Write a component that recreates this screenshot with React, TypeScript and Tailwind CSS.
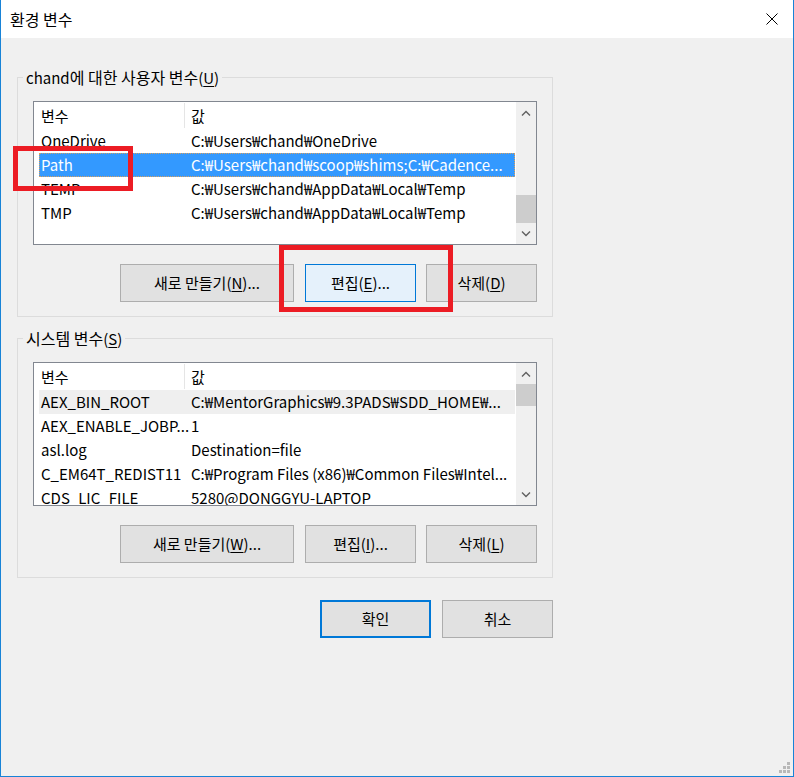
import React from "react";

const Chevron = ({ up }: { up?: boolean }) => (
  <svg width="10" height="6" viewBox="0 0 10 6" className="block">
    <path
      d={up ? "M1 5.5 L5 1.5 L9 5.5" : "M1 0.5 L5 4.5 L9 0.5"}
      fill="none"
      stroke="#606060"
      strokeWidth="1.4"
    />
  </svg>
);

type Row = { name: string; value: string; selected?: boolean; hover?: boolean };

function ListBox({
  rows,
  thumbTop,
  thumbH,
}: {
  rows: Row[];
  thumbTop: number;
  thumbH: number;
}) {
  return (
    <div className="w-[504px] h-[144px] border border-[#828790] bg-white flex overflow-hidden">
      <div className="w-[481px] flex flex-col pl-[5px] overflow-hidden">
        <div className="h-[27px] shrink-0 flex items-center">
          <div className="w-[145px] h-[25px] flex items-center pl-[2px]">변수</div>
          <div className="w-px h-[25px] bg-[#e5e5e5]" />
          <div className="flex-1 flex items-center pl-[6px]">값</div>
        </div>
        {rows.map((r) => (
          <div
            key={r.name}
            className={
              "h-[24px] shrink-0 flex items-center whitespace-nowrap leading-[20px] " +
              (r.selected
                ? "bg-[#3399ff] text-white border border-dotted border-[#d8a060]"
                : r.hover
                ? "bg-[#efefef] border border-transparent"
                : "border border-transparent")
            }
          >
            <div className="w-[151px] pl-[1px] overflow-x-hidden h-[20px]">{r.name}</div>
            <div className="flex-1 overflow-x-hidden h-[20px]">{r.value}</div>
          </div>
        ))}
      </div>
      <div className="w-px bg-white" />
      <div className="w-[20px] bg-[#f0f0f0] flex flex-col relative">
        <div className="h-[21px] shrink-0 flex items-center justify-center">
          <Chevron up />
        </div>
        <div className="flex-1 relative">
          <div
            className="absolute left-0 right-0 bg-[#cdcdcd]"
            style={{ top: thumbTop, height: thumbH }}
          />
        </div>
        <div className="h-[21px] shrink-0 flex items-center justify-center">
          <Chevron />
        </div>
      </div>
    </div>
  );
}

function Btn({
  children,
  w,
  focus,
}: {
  children: React.ReactNode;
  w: string;
  focus?: boolean;
}) {
  return (
    <div
      className={
        "h-[38px] flex items-center justify-center leading-[20px] " +
        w +
        (focus
          ? " bg-[#e5f1fb] border border-[#0078d7]"
          : " bg-[#e1e1e1] border border-[#adadad]")
      }
    >
      {children}
    </div>
  );
}

function Group({
  label,
  children,
  className,
}: {
  label: React.ReactNode;
  children: React.ReactNode;
  className?: string;
}) {
  return (
    <div
      className={
        "relative w-[536px] h-[240px] border border-[#dcdcdc] pt-[23px] px-[15px] " +
        (className || "")
      }
    >
      <div className="absolute left-[5px] top-[-12px] h-[22px] px-[3px] bg-[#f0f0f0] flex items-center leading-[20px]">
        {label}
      </div>
      {children}
    </div>
  );
}

const U = ({ c }: { c: string }) => (
  <span className="underline underline-offset-[2px] decoration-1">{c}</span>
);

const K = ({ children }: { children: React.ReactNode }) => (
  <span className="text-[16px]">{children}</span>
);

export default function App() {
  const userRows: Row[] = [
    { name: "OneDrive", value: "C:₩Users₩chand₩OneDrive" },
    {
      name: "Path",
      value: "C:₩Users₩chand₩scoop₩shims;C:₩Cadence...",
      selected: true,
    },
    { name: "TEMP", value: "C:₩Users₩chand₩AppData₩Local₩Temp" },
    { name: "TMP", value: "C:₩Users₩chand₩AppData₩Local₩Temp" },
  ];
  const sysRows: Row[] = [
    {
      name: "AEX_BIN_ROOT",
      value: "C:₩MentorGraphics₩9.3PADS₩SDD_HOME₩...",
      hover: true,
    },
    { name: "AEX_ENABLE_JOBP...", value: "1" },
    { name: "asl.log", value: "Destination=file" },
    {
      name: "C_EM64T_REDIST11",
      value: "C:₩Program Files (x86)₩Common Files₩Intel...",
    },
    { name: "CDS_LIC_FILE", value: "5280@DONGGYU-LAPTOP" },
  ];

  return (
    <div className="relative w-[794px] h-[777px] flex flex-col border-x border-b border-[#1883d7] font-['Noto_Sans_CJK_KR',sans-serif] text-[15px] leading-none text-black overflow-hidden">
      {/* Title bar */}
      <div className="h-[38px] shrink-0 bg-white flex items-center justify-between pl-[9px] pr-[15px]">
        <span className="text-[16px] leading-[20px]">환경 변수</span>
        <svg width="12" height="12" viewBox="0 0 12 12">
          <path d="M0.5 0.5 L11.5 11.5 M11.5 0.5 L0.5 11.5" stroke="#000" strokeWidth="1" />
        </svg>
      </div>

      {/* Body */}
      <div className="flex-1 bg-[#f0f0f0] pl-[16px] pt-[39px] flex flex-col relative">
        <Group
          label={
            <span>
              chand<K>에 대한 사용자 변수</K>(<U c="U" />)
            </span>
          }
        >
          <ListBox rows={userRows} thumbTop={72} thumbH={28} />
          <div className="mt-[19px] flex justify-end gap-[10px]">
            <Btn w="w-[174px] mr-[1px]">
              <span>
                새로 만들기(<U c="N" />)...
              </span>
            </Btn>
            <Btn w="w-[111px]" focus>
              <span>
                편집(<U c="E" />)...
              </span>
            </Btn>
            <Btn w="w-[111px]">
              <span>
                삭제(<U c="D" />)
              </span>
            </Btn>
          </div>
        </Group>

        <Group
          className="mt-[21px]"
          label={
            <span>
              <K>시스템 변수</K>(<U c="S" />)
            </span>
          }
        >
          <ListBox rows={sysRows} thumbTop={0} thumbH={22} />
          <div className="mt-[19px] flex justify-end gap-[10px]">
            <Btn w="w-[174px] mr-[1px]">
              <span>
                새로 만들기(<U c="W" />)...
              </span>
            </Btn>
            <Btn w="w-[111px]">
              <span>
                편집(<U c="I" />)...
              </span>
            </Btn>
            <Btn w="w-[111px]">
              <span>
                삭제(<U c="L" />)
              </span>
            </Btn>
          </div>
        </Group>

        <div className="w-[536px] mt-[22px] flex justify-end gap-[11px]">
          <div className="w-[111px] h-[38px] bg-[#e1e1e1] border-2 border-[#0078d7] flex items-center justify-center leading-[20px]">
            확인
          </div>
          <div className="w-[111px] h-[38px] bg-[#e1e1e1] border border-[#adadad] flex items-center justify-center leading-[20px]">
            취소
          </div>
        </div>

        {/* resize grip */}
        <svg
          className="absolute right-[3px] bottom-[3px]"
          width="11"
          height="11"
          viewBox="0 0 11 11"
        >
          <rect x="8" y="0" width="3" height="3" fill="#b8b8b8" />
          <rect x="4" y="4" width="3" height="3" fill="#b8b8b8" />
          <rect x="8" y="4" width="3" height="3" fill="#b8b8b8" />
          <rect x="0" y="8" width="3" height="3" fill="#b8b8b8" />
          <rect x="4" y="8" width="3" height="3" fill="#b8b8b8" />
          <rect x="8" y="8" width="3" height="3" fill="#b8b8b8" />
        </svg>
      </div>

      {/* red annotation boxes */}
      <div className="absolute left-[12px] top-[146px] w-[120px] h-[45px] border-[5px] border-[#ec1c24]" />
      <div className="absolute left-[278px] top-[245px] w-[174px] h-[67px] border-[5px] border-[#ec1c24]" />
    </div>
  );
}
